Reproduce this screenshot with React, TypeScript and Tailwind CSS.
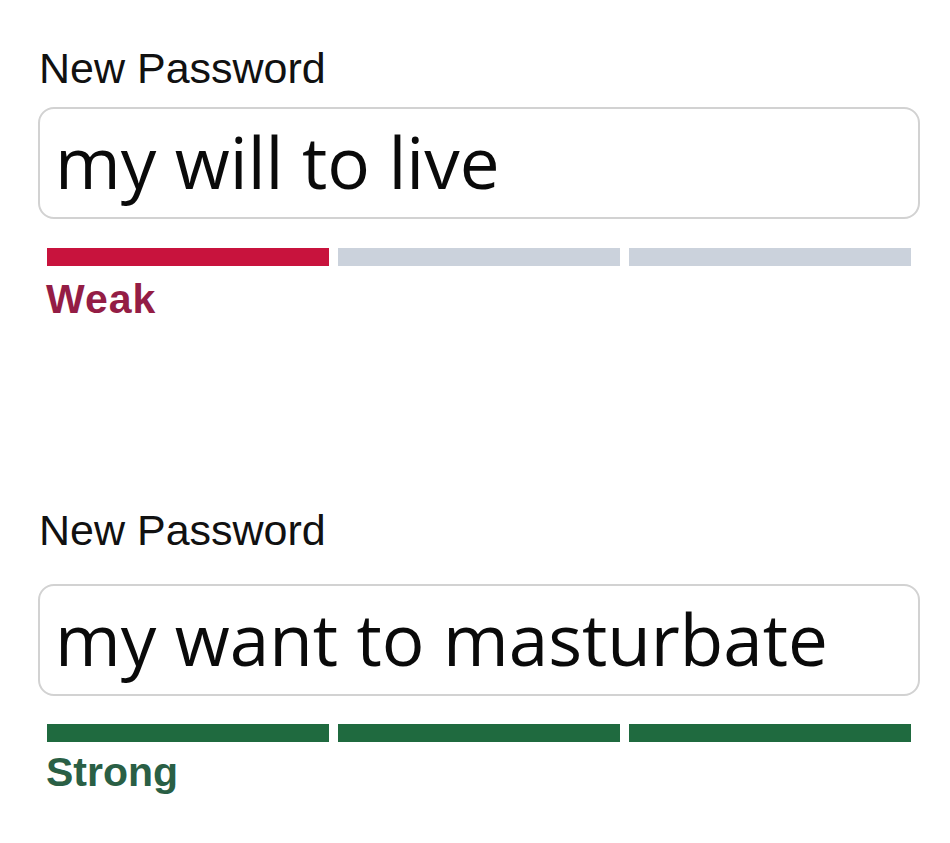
import React from 'react';

interface StrengthFieldProps {
  value: string;
  level: 'weak' | 'strong';
  labelGap: string;
  barGap: string;
  hintGap: string;
}

const sans = "font-['Liberation_Sans',Arial,sans-serif]";

function StrengthField({ value, level, labelGap, barGap, hintGap }: StrengthFieldProps) {
  const filled = level === 'weak' ? 1 : 3;
  const barColor = level === 'weak' ? 'bg-[#c8133d]' : 'bg-[#1f6a3f]';

  return (
    <div className="flex flex-col">
      <label className={`${sans} pl-[1px] text-[43px] leading-none text-[#111]`}>New Password</label>

      <div
        className={`${labelGap} h-[112px] rounded-[16px] border-2 border-[#d2d2d2] bg-white pl-[15px] pt-[17px]`}
      >
        <div className="font-['Open_Sans',sans-serif] text-[71px] leading-none text-[#0a0a0a]">{value}</div>
      </div>

      <div className={`${barGap} flex gap-[9px] px-[9px]`}>
        {[0, 1, 2].map((i) => (
          <div key={i} className={`h-[18px] flex-1 ${i < filled ? barColor : 'bg-[#cbd2dc]'}`} />
        ))}
      </div>

      <span
        className={`${hintGap} ${sans} pl-[8px] text-[41px] font-bold leading-none ${
          level === 'weak' ? 'text-[#941d45] tracking-[1px]' : 'text-[#2a5f45]'
        }`}
      >
        {level === 'weak' ? 'Weak' : 'Strong'}
      </span>
    </div>
  );
}

export default function App() {
  return (
    <div className="min-h-[843px] w-[950px] bg-white pl-[38px] pr-[30px] pt-[47px]">
      <StrengthField value="my will to live" level="weak" labelGap="mt-[17px]" barGap="mt-[29px]" hintGap="mt-[13px]" />
      <div className="mt-[189px]">
        <StrengthField
          value="my want to masturbate"
          level="strong"
          labelGap="mt-[32px]"
          barGap="mt-[28px]"
          hintGap="mt-[10px]"
        />
      </div>
    </div>
  );
}
